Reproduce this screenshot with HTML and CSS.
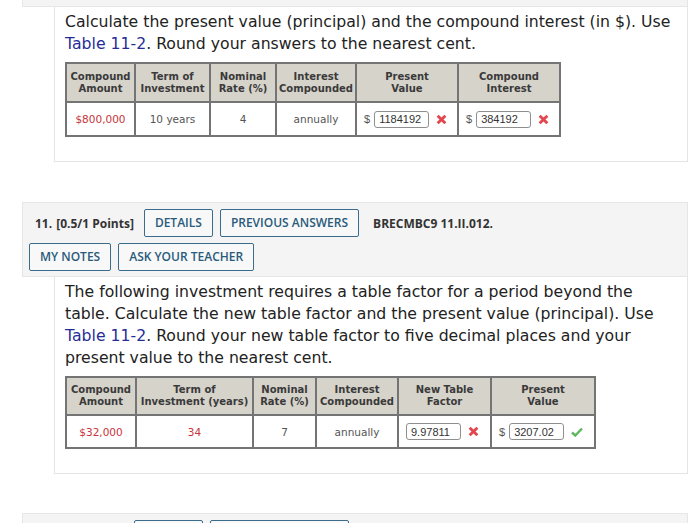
FILE: index.html
```html
<!DOCTYPE html>
<html>
<head>
<meta charset="utf-8">
<link rel="stylesheet" href="styles.css">
</head>
<body>
<div class="page">
  <div class="qhead qhead-stub"></div>
  <div class="qbody qbody-a">
    <p class="prompt">Calculate the present value (principal) and the compound interest (in $). Use<br><a class="tlink">Table 11-2</a>. Round your answers to the nearest cent.</p>
    <table class="grid grid-a">
      <colgroup><col class="a1"><col class="a2"><col class="a3"><col class="a4"><col class="a5"><col class="a6"></colgroup>
      <tr class="hrow">
        <th>Compound<br>Amount</th><th>Term of<br>Investment</th><th>Nominal<br>Rate (%)</th><th>Interest<br>Compounded</th><th>Present<br>Value</th><th>Compound<br>Interest</th>
      </tr>
      <tr class="brow">
        <td class="red">$800,000</td><td>10 years</td><td>4</td><td>annually</td>
        <td><div class="ans"><span class="cur">$</span><input class="field" type="text" value="1184192" readonly><svg class="mark" width="11" height="11" viewBox="0 0 10 10"><path d="M1.5 1.5 L8.5 8.5 M8.5 1.5 L1.5 8.5" stroke="#e2474f" stroke-width="2.6" stroke-linecap="butt"/></svg></div></td>
        <td><div class="ans"><span class="cur">$</span><input class="field" type="text" value="384192" readonly><svg class="mark" width="11" height="11" viewBox="0 0 10 10"><path d="M1.5 1.5 L8.5 8.5 M8.5 1.5 L1.5 8.5" stroke="#e2474f" stroke-width="2.6" stroke-linecap="butt"/></svg></div></td>
      </tr>
    </table>
  </div>

  <div class="qhead">
    <div class="qrow">
      <span class="qnum">11.</span><span class="qpts">[0.5/1 Points]</span>
      <button class="btn">DETAILS</button>
      <button class="btn">PREVIOUS ANSWERS</button>
      <span class="qid">BRECMBC9 11.II.012.</span>
    </div>
    <div class="qrow qrow-b">
      <button class="btn">MY NOTES</button>
      <button class="btn">ASK YOUR TEACHER</button>
    </div>
  </div>
  <div class="qbody qbody-b">
    <p class="prompt">The following investment requires a table factor for a period beyond the<br>table. Calculate the new table factor and the present value (principal). Use<br><a class="tlink">Table 11-2</a>. Round your new table factor to five decimal places and your<br>present value to the nearest cent.</p>
    <table class="grid grid-b">
      <colgroup><col class="b1"><col class="b2"><col class="b3"><col class="b4"><col class="b5"><col class="b6"></colgroup>
      <tr class="hrow">
        <th>Compound<br>Amount</th><th>Term of<br>Investment (years)</th><th>Nominal<br>Rate (%)</th><th>Interest<br>Compounded</th><th>New Table<br>Factor</th><th>Present<br>Value</th>
      </tr>
      <tr class="brow">
        <td class="red">$32,000</td><td class="red">34</td><td>7</td><td>annually</td>
        <td><div class="ans"><input class="field" type="text" value="9.97811" readonly><svg class="mark" width="11" height="11" viewBox="0 0 10 10"><path d="M1.5 1.5 L8.5 8.5 M8.5 1.5 L1.5 8.5" stroke="#e2474f" stroke-width="2.6" stroke-linecap="butt"/></svg></div></td>
        <td><div class="ans"><span class="cur">$</span><input class="field" type="text" value="3207.02" readonly><svg class="mark check" width="12" height="10" viewBox="0 0 12 10"><path d="M1 5.5 L4.3 8.5 L11 1.5" fill="none" stroke="#5cb85c" stroke-width="2.4"/></svg></div></td>
      </tr>
    </table>
  </div>

  <div class="qhead qhead-c">
    <div class="qrow">
      <span class="qnum">12.</span><span class="qpts">[0/1 Points]</span>
      <button class="btn">DETAILS</button>
      <button class="btn">PREVIOUS ANSWERS</button>
      <span class="qid">BRECMBC9 11.II.013.</span>
    </div>
  </div>
</div>
</body>
</html>
```

FILE: styles.css
```css
html, body {
  margin: 0;
  padding: 0;
  background: #ffffff;
}
body {
  height: 523px;
  overflow: hidden;
}
.page {
  display: flex;
  flex-direction: column;
  width: 700px;
}
.qhead {
  margin-left: 22px;
  width: 666px;
  box-sizing: border-box;
  background: #f4f4f4;
  border: 1px solid #e6e6e6;
  padding: 6px 6px 5px 6px;
  display: flex;
  flex-direction: column;
  gap: 6px;
  font-family: "Open Sans", "Liberation Sans", sans-serif;
}
.qhead-stub {
  height: 7px;
  padding: 0;
  border-top: none;
}
.qhead-c {
  margin-top: 39px;
}
.qrow {
  display: flex;
  align-items: center;
  height: 28px;
}
.qnum {
  font-weight: 700;
  font-size: 12px;
  color: #333;
  margin-left: 6px;
  margin-right: 4px;
}
.qpts {
  font-weight: 700;
  font-size: 12px;
  color: #333;
  margin-right: 10px;
}
.qid {
  font-weight: 700;
  font-size: 12px;
  color: #333;
  margin-left: 7px;
}
.btn {
  font-family: "Open Sans", "Liberation Sans", sans-serif;
  font-weight: 600;
  font-size: 12px;
  color: #2a5b7c;
  background: #f8f8f8;
  border: 1.5px solid #3a6d8c;
  border-radius: 2px;
  height: 28px;
  padding: 0 10px;
  margin-right: 7px;
  line-height: 1;
}
.qbody {
  margin-left: 54px;
  width: 634px;
  box-sizing: border-box;
  border: 1px solid #e4e4e4;
  border-top: none;
  padding: 4px 10px 24px 10px;
  background: #fff;
}
.qbody-a + .qhead {
  margin-top: 40px;
}
.prompt {
  margin: 0 0 7px 0;
  font-family: "DejaVu Sans", Verdana, sans-serif;
  font-size: 15.7px;
  line-height: 22px;
  white-space: nowrap;
  color: #222;
}
.tlink {
  color: #262c96;
}
.grid {
  border-collapse: collapse;
  table-layout: fixed;
  font-family: "DejaVu Sans", Verdana, sans-serif;
  border: 2px solid #747474;
}
.grid th, .grid td {
  border: 2px solid #747474;
  text-align: center;
  padding: 0;
}
.grid th {
  background: #d6d3cb;
  font-size: 10px;
  font-weight: 700;
  line-height: 12px;
  color: #3a3a3a;
}
.grid td {
  font-size: 10.5px;
  color: #555;
  background: #fff;
}
.grid-a { width: 494px; }
.grid-a .hrow { height: 39px; }
.grid-a .brow { height: 34px; }
.a1 { width: 69px; }
.a2 { width: 75px; }
.a3 { width: 66px; }
.a4 { width: 80px; }
.a5 { width: 102px; }
.a6 { width: 102px; }
.grid-b { width: 529px; }
.grid-b .hrow { height: 38px; }
.grid-b .brow { height: 33px; }
.b1 { width: 70px; }
.b2 { width: 117px; }
.b3 { width: 63px; }
.b4 { width: 82px; }
.b5 { width: 93px; }
.b6 { width: 104px; }
.grid td.red {
  color: #c7343c;
}
.ans {
  display: flex;
  align-items: center;
  justify-content: flex-start;
  padding-left: 7px;
  gap: 5px;
}
.cur {
  font-family: "Liberation Sans", Arial, sans-serif;
  font-size: 11px;
  color: #555;
  margin-right: -1px;
}
.field {
  width: 55px;
  height: 17px;
  box-sizing: border-box;
  border: 1px solid #8f8f8f;
  border-radius: 3px;
  font-family: "Liberation Sans", Arial, sans-serif;
  font-size: 11px;
  color: #333;
  padding: 0 4px;
  background: #fff;
  margin: 0;
}
.mark {
  margin-left: 2px;
}
```
